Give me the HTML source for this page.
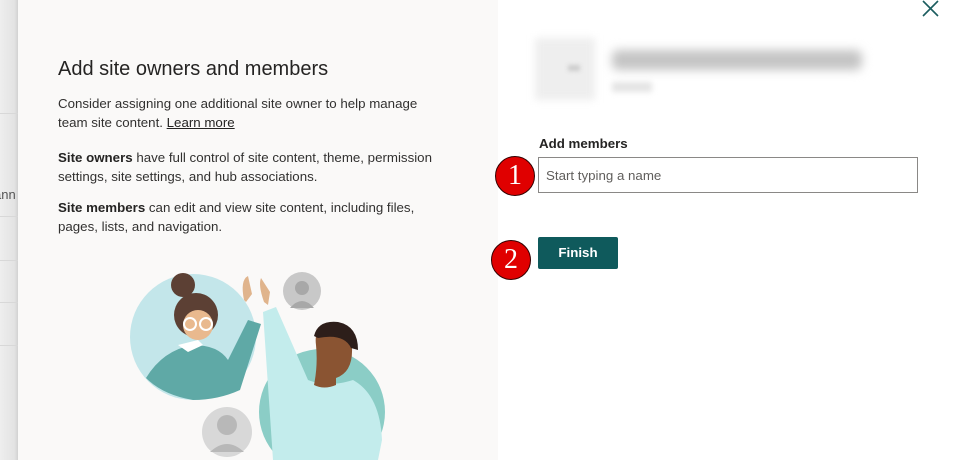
<!DOCTYPE html>
<html><head><meta charset="utf-8"><style>
*{margin:0;padding:0;box-sizing:border-box}
body{width:957px;height:460px;overflow:hidden;background:#fff;font-family:"Liberation Sans",sans-serif;position:relative;color:#323130}
.strip{position:absolute;left:0;top:0;width:18px;height:460px;background:linear-gradient(90deg,#eeeeee,#e3e3e3 80%,#d2d2d2)}
.strip i{position:absolute;left:0;width:18px;height:1px;background:#d8d8d8}
.left{position:absolute;left:18px;top:0;width:480px;height:460px;background:#faf9f8}
h1{position:absolute;left:40px;top:58px;font-size:20px;font-weight:normal;color:#252423}
p{position:absolute;left:40px;width:382px;font-size:13.3px;line-height:19px;color:#323130}
b{font-weight:600;color:#252423}
a{color:#252423;text-decoration:underline}
.lbl{position:absolute;left:539px;top:136px;font-size:13.3px;font-weight:600;color:#252423}
.inp{position:absolute;left:538px;top:157px;width:380px;height:36px;border:1px solid #8a8886;background:#fff;font-size:13.3px;color:#605e5c;padding:10px 7px}
.btn{position:absolute;left:538px;top:237px;width:80px;height:32px;background:#0f5a5c;border-radius:2px;color:#fff;font-weight:bold;font-size:13.3px;text-align:center;line-height:32px}
.num{position:absolute;width:40px;height:40px;border-radius:50%;background:#e00000;border:1.5px solid #300;color:#fff;font-family:"Liberation Serif",serif;font-size:28px;text-align:center;line-height:38px}
</style></head><body>
<div class="strip"><i style="top:113px"></i><i style="top:216px"></i><i style="top:260px"></i><i style="top:302px"></i><i style="top:345px"></i>
<span style="position:absolute;left:-6px;top:187px;font-size:13px;color:#555">ann</span></div>
<div class="left">
<h1>Add site owners and members</h1>
<p style="top:94px">Consider assigning one additional site owner to help manage team site content. <a>Learn more</a></p>
<p style="top:148px"><b>Site owners</b> have full control of site content, theme, permission settings, site settings, and hub associations.</p>
<p style="top:198px"><b>Site members</b> can edit and view site content, including files, pages, lists, and navigation.</p>
<svg style="position:absolute;left:0;top:0" width="480" height="460">
<circle cx="175" cy="337" r="63" fill="#c3e6ea"/>
<path d="M128 378 Q145 350 175 345 Q200 345 210 360 L230 320 L243 324 L222 390 Q200 400 175 400 Q145 395 128 378Z" fill="#5fa9a6"/>
<circle cx="178" cy="315" r="22" fill="#5c4034"/>
<circle cx="165" cy="285" r="12" fill="#5c4034"/>
<circle cx="180" cy="325" r="15" fill="#e9b98e"/>
<circle cx="172" cy="324" r="6" fill="none" stroke="#fff" stroke-width="2"/><circle cx="188" cy="324" r="6" fill="none" stroke="#fff" stroke-width="2"/>
<path d="M160 345 L170 352 L185 345 L180 340Z" fill="#fff"/>
<path d="M226 300 Q222 280 230 276 L234 294 L228 302Z" fill="#e0b48c"/>
<path d="M246 302 Q240 285 243 278 L252 292 L250 305Z" fill="#e0b48c"/>
<circle cx="284" cy="291" r="19" fill="#c8c8c8"/>
<circle cx="284" cy="288" r="7" fill="#a8a8a8"/>
<path d="M272 308 Q284 294 296 308Z" fill="#a8a8a8"/>
<circle cx="209" cy="432" r="25" fill="#d8d8d8"/>
<circle cx="209" cy="425" r="10" fill="#b8b8b8"/>
<path d="M192 452 Q209 436 226 452Z" fill="#b8b8b8"/>
<circle cx="304" cy="412" r="63" fill="#8bcdc6"/>
<path d="M255 460 L245 312 L258 307 L290 380 Q310 388 335 380 Q362 395 364 440 L360 460Z" fill="#c3ecec"/>
<path d="M298 345 Q296 330 306 328 Q328 326 334 348 Q335 372 318 378 L318 385 Q306 390 296 385 Q300 365 298 345Z" fill="#8a5432"/>
<path d="M296 336 Q300 320 320 322 Q340 326 340 350 L333 348 Q326 333 300 338Z" fill="#2d1e1a"/>
</svg>
</div>
<svg style="position:absolute;left:920px;top:0" width="20" height="20"><path d="M3 1 L18 16 M18 1 L3 16" stroke="#1b5d5f" stroke-width="1.6"/></svg>
<div style="position:absolute;left:535px;top:38px;width:60px;height:62px;background:#eee;filter:blur(4px)"></div>
<div style="position:absolute;left:568px;top:65px;width:12px;height:6px;background:#ccc;filter:blur(2px)"></div>
<div style="position:absolute;left:612px;top:50px;width:250px;height:20px;background:#c4c4c4;filter:blur(5px);border-radius:6px"></div>
<div style="position:absolute;left:612px;top:82px;width:40px;height:10px;background:#e4e4e4;filter:blur(3px)"></div>
<div class="lbl">Add members</div>
<div class="inp">Start typing a name</div>
<div class="btn">Finish</div>
<div class="num" style="left:495px;top:156px">1</div>
<div class="num" style="left:491px;top:240px">2</div>
</body></html>
